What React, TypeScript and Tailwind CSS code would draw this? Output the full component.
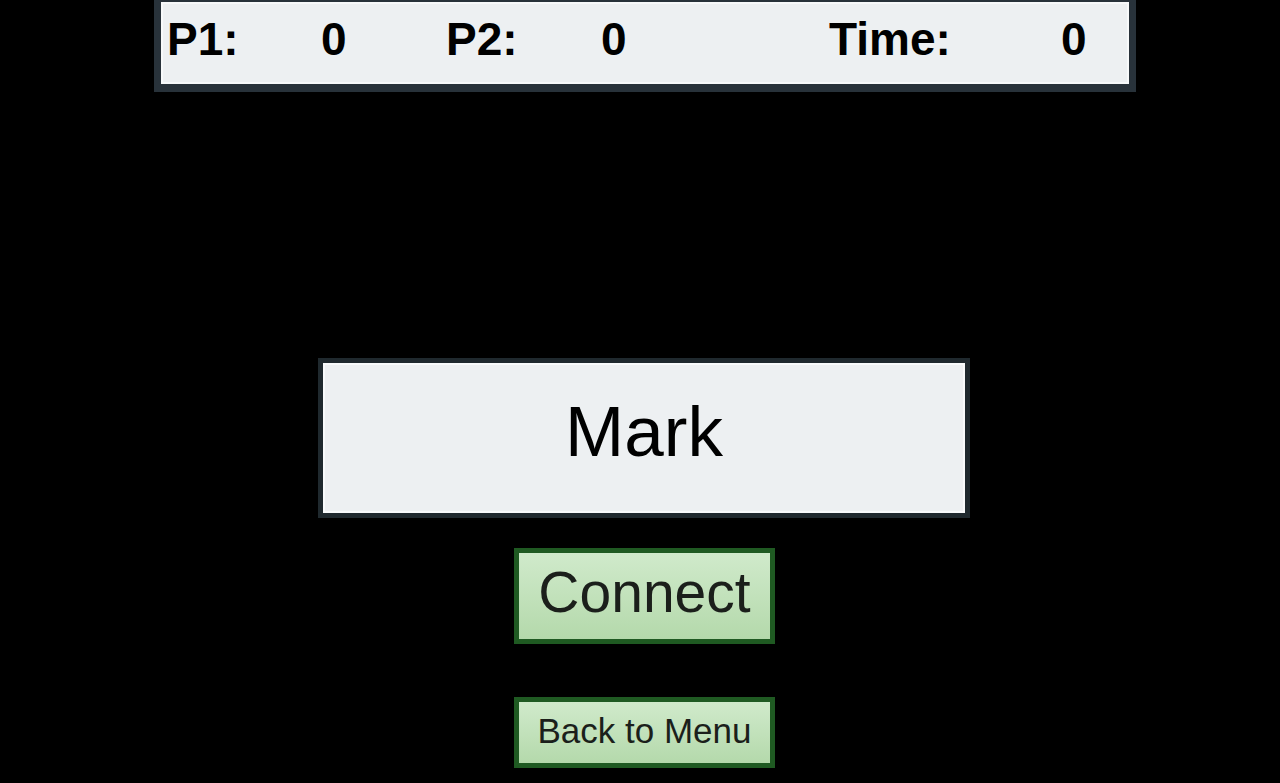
const font = "font-['Liberation_Sans','Arial',sans-serif]";

const ScoreBar = () => {
  return (
    <div className="ml-[10px] h-[92px] w-[982px] border-x-[7px] border-t-[2px] border-b-[8px] border-[#28323a] bg-[#edf0f2] shadow-[inset_0_0_0_2px_#f7f9fa]">
      <div className={`flex h-full items-start pt-[14px] pl-[6px] text-[46px] font-bold leading-none text-black ${font}`}>
        <span className="w-[154px]">P1:</span>
        <span className="w-[125px]">0</span>
        <span className="w-[155px]">P2:</span>
        <span className="w-[228px]">0</span>
        <span className="w-[232px]">Time:</span>
        <span>0</span>
      </div>
    </div>
  );
};

const GreenButton = ({ label, big }: { label: string; big?: boolean }) => (
  <button
    className={`flex w-[261px] items-center justify-center border-[5px] border-[#1f5a22] bg-gradient-to-b from-[#d0eacb] to-[#b4d9ab] text-[#1b1f1b] leading-none ${font} ${
      big ? "h-[96px] text-[57px] pb-[8px]" : "h-[71px] text-[35px] pb-[4px]"
    }`}
  >
    {label}
  </button>
);

export default function App() {
  return (
    <div className="flex h-[783px] w-full flex-col items-center overflow-hidden bg-black">
      <ScoreBar />
      <div className="mt-[266px] ml-[8px] flex h-[160px] w-[652px] items-center justify-center border-[5px] border-[#1f292e] bg-[#edf0f2] shadow-[inset_0_0_0_2px_#f8fafb]">
        <span className={`pb-[14px] text-[71px] leading-none text-black ${font}`}>Mark</span>
      </div>
      <div className="mt-[30px] ml-[9px]">
        <GreenButton label="Connect" big />
      </div>
      <div className="mt-[53px] ml-[9px]">
        <GreenButton label="Back to Menu" />
      </div>
    </div>
  );
}
